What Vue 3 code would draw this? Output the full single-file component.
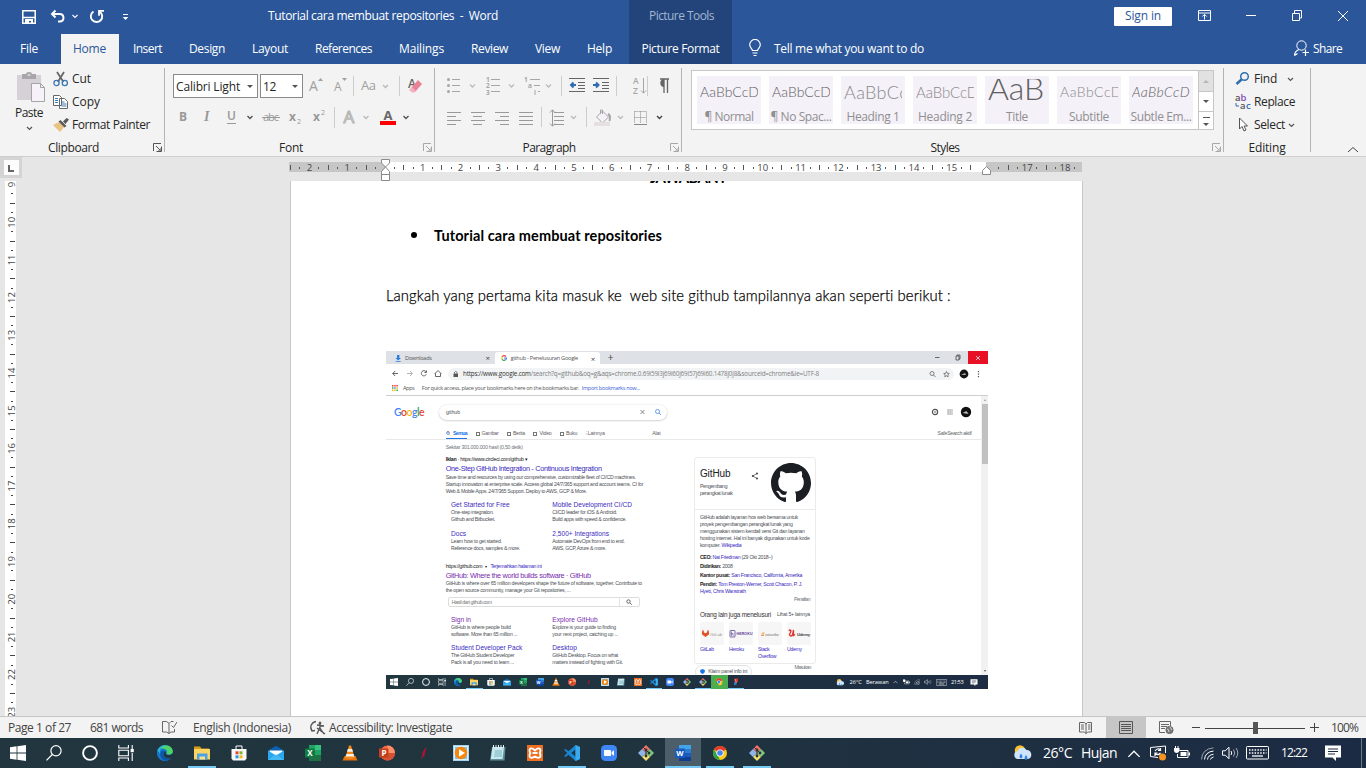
<script setup>
// Sets a text run to an exact width by spreading the difference over its letters.
const vFit = {
  mounted(el, { value }) {
    const range = document.createRange()
    range.selectNodeContents(el)
    const natural = range.getBoundingClientRect().width
    el.style.letterSpacing = `${(value - natural) / el.textContent.length}px`
    el.style.width = `${value}px`
  },
}

const docTitle = 'Tutorial cara membuat repositories\u00a0 -\u00a0 Word'
const paragraph = 'Langkah yang pertama kita masuk ke\u00a0 web site github tampilannya akan seperti berikut :'

const tabs = [
  ['Insert', 29], ['Design', 36], ['Layout', 36], ['References', 57],
  ['Mailings', 45], ['Review', 37], ['View', 25], ['Help', 25],
]

const styles = [
  { name: '¶ Normal', w: 49, sample: 'AaBbCcD', sw: 59, cls: 's-normal' },
  { name: '¶ No Spac...', w: 61, sample: 'AaBbCcD', sw: 59, cls: 's-normal' },
  { name: 'Heading 1', w: 53, sample: 'AaBbCc', sw: 64, cls: 's-h1' },
  { name: 'Heading 2', w: 54, sample: 'AaBbCcD', sw: 62, cls: 's-h2' },
  { name: 'Title', w: 22, sample: 'AaB', sw: 56, cls: 's-title' },
  { name: 'Subtitle', w: 40, sample: 'AaBbCcD', sw: 62, cls: 's-sub' },
  { name: 'Subtle Em...', w: 61, sample: 'AaBbCcD', sw: 58, cls: 's-em' },
]

const CM = 37.78
const hMarks = []
for (let q = -10; q <= 73; q++) {
  const x = 96 + (q * CM) / 4
  if (x < 1 || x > 791 || q === 0 || q === 64 || q === 63) continue
  hMarks.push({ x, kind: q % 4 === 0 ? 'n' : q % 2 === 0 ? 'bar' : 'dot', label: Math.abs(q / 4) })
}
const vMarks = []
for (let q = 36; q <= 92; q++) {
  vMarks.push({ y: 3.5 + ((q - 36) * 37.7) / 4, kind: q % 4 === 0 ? 'n' : q % 2 === 0 ? 'bar' : 'dot', label: q / 4 })
}

const systemIcons = ['win', 'search', 'cortana', 'tasks']
const apps = [
  ['edge'], ['folder', 'run'], ['store'], ['mail'], ['excel'], ['vlc'], ['ppt'], ['feather'], ['media'],
  ['note'], ['xampp'], ['code', 'run'], ['zoom'], ['git'], ['word', 'active'], ['chrome', 'run'], ['git', 'run'],
]
const shotApps = [
  ['edge'], ['folder', 'run'], ['store'], ['mail'], ['excel'], ['word'], ['vlc'], ['ppt'], ['feather'], ['media'],
  ['note'], ['xampp'], ['code', 'run'], ['zoom'], ['git'], ['git', 'run'], ['chrome', 'live'], ['snip', 'run'],
]

const adLinks = [
  [['Get Started for Free', 58.7], ['One-step integration.', 42.7], ['Github and Bitbucket.', 44]],
  [['Mobile Development CI/CD', 79.7], ['CI/CD leader for iOS & Android.', 64.7], ['Build apps with speed & confidence.', 74]],
  [['Docs', 15], ['Learn how to get started.', 50.7], ['Reference docs, samples & more.', 69]],
  [['2,500+ Integrations', 56.7], ['Automate DevOps from end to end.', 72.3], ['AWS, GCP, Azure & more.', 53.7]],
]
const siteLinks = [
  [['Sign in', 20, 1], ['GitHub is where people build', 59.7], ['software. More than 65 million ...', 66.3]],
  [['Explore GitHub', 45.4, 1], ['Explore is your guide to finding', 63.7], ['your next project, catching up ...', 65.7]],
  [['Student Developer Pack', 71.3], ['The GitHub Student Developer', 63.3], ['Pack is all you need to learn ...', 63]],
  [['Desktop', 24.7], ['GitHub Desktop. Focus on what', 65.7], ['matters instead of fighting with Git.', 70.7]],
]
const about = [
  ['GitHub adalah layanan hos web bersama untuk', 98],
  ['proyek pengembangan perangkat lunak yang', 92.7],
  ['menggunakan sistem kendali versi Git dan layanan', 104.7],
  ['hosting internet. Hal ini banyak digunakan untuk kode', 109.7],
]
const related = [
  { id: 'gitlab', name: 'GitLab', w: 14 }, { id: 'heroku', name: 'Heroku', w: 15 },
  { id: 'stack', name: 'Stack Overflow', w: 0 }, { id: 'udemy', name: 'Udemy', w: 15 },
]
</script>

<template>
  <div class="screen">
    <svg class="sprite" width="0" height="0">
      <symbol id="chev" viewBox="0 0 7 5"><path d="M1 1l2.5 2.5L6 1" fill="none" stroke="currentColor" stroke-width="1.2" /></symbol>
      <symbol id="launch" viewBox="0 0 9 9"><path d="M.5 8V.5H8M3 3l4 4M8.5 3.5v5h-5M8 5v3H5" fill="none" stroke="currentColor" /></symbol>
      <symbol id="win" viewBox="0 0 16 16"><path fill="#fff" d="M0 2.2l6.6-.9v6.2H0zM7.4 1.2L16 0v7.5H7.4zM0 8.4h6.6v6.3L0 13.8zM7.4 8.4H16V16l-8.6-1.2z" /></symbol>
      <symbol id="search" viewBox="0 0 16 16"><g fill="none" stroke="#fff" stroke-width="1.2"><circle cx="10" cy="5.8" r="5.1" /><path d="M6.3 9.5L.5 15.4" /></g></symbol>
      <symbol id="cortana" viewBox="0 0 16 16"><circle cx="8" cy="8" r="6.9" fill="none" stroke="#fff" stroke-width="1.9" /></symbol>
      <symbol id="tasks" viewBox="0 0 16 16"><g fill="none" stroke="#fff" stroke-width="1.1"><path d="M.8 0v3h9.6V0M.8 16v-3h9.6v3M.8 5.3h9.6v5.4H.8zM14.2 0v4M14.2 8v8" /></g><path fill="#fff" d="M12.6 4h3.2v3.2h-3.2z" /></symbol>
      <symbol id="edge" viewBox="0 0 16 16"><path fill="#1579cf" d="M8 0a8 8 0 1 0 6 13.2c-3 1.5-6.7.2-7.2-3.2C6.500 8 7.500 6.500 8 6c1.200 1 .3 2.500 1.500 3.600 2 1 6.500.2 6.500-2.600A8 8 0 0 0 8 0z" /><path fill="#4ed36b" d="M2 3.500C5-.8 12-1 15 3.500c1.800 3 .5 5.500-2 5.900-2.300.4-3.800-.3-3.200-1.500C10.800 5.500 9 3 2 3.500z" /><path fill="#2bb5d8" d="M.3 6C1.500 2 5.500-.8 10 .5 5 .5 2.500 4 3 9c-1-2-1-3-2.700-3z" /><path fill="#0f56a5" d="M3.500 8c-1 4 2 7.500 6 7.700 2-.3 3.500-1.200 4.500-2.500-4 1-7-.5-7.300-4C6.500 7 8 6 8 6 6 5 4 6 3.500 8z" /></symbol>
      <symbol id="folder" viewBox="0 0 16 16"><path fill="#d99b16" d="M0 1.500h6l1.500 2H15v4H0z" /><path fill="#fcd462" d="M0 4h16v10.500H0z" /><path fill="#4aa3e6" d="M3 8.500h10.500V14.500H3z" /><path fill="#fbe08c" d="M5.500 11.500h5.500v3H5.500z" /></symbol>
      <symbol id="store" viewBox="0 0 16 16"><path fill="none" stroke="#fff" d="M5 4V1h6v3" /><path fill="#f8f8f8" d="M.5 4h15v9.500l-1.500 2h-12l-1.500-2z" /><path fill="#e8492a" d="M4.500 6.300h3v3h-3z" /><path fill="#7ab929" d="M8.500 6.300h3v3h-3z" /><path fill="#1f9be8" d="M4.500 10.300h3v3h-3z" /><path fill="#f9b813" d="M8.500 10.300h3v3h-3z" /></symbol>
      <symbol id="mail" viewBox="0 0 16 16"><path fill="#0c61b3" d="M0 5.500L8 .8l8 4.700v4H0z" /><path fill="#fff" d="M1.500 5.500h13v5h-13z" /><path fill="#2aa7ee" d="M0 5.500l8 5 8-5V15H0z" /><path fill="#5cc9f8" d="M0 15l8-6 8 6z" opacity=".5" /></symbol>
      <symbol id="excel" viewBox="0 0 16 16"><path fill="#1e7145" d="M4 0h12v16H4z" /><path fill="#33c481" d="M10 0h6v5h-6z" /><path fill="#21a366" d="M4 0h6v5H4zM10 5h6v5h-6z" /><path fill="#107c41" d="M0 3.500h9.500v9H0z" /><text x="4.800" y="11" font-size="8" font-weight="700" fill="#fff" text-anchor="middle" font-family="Open Sans">X</text></symbol>
      <symbol id="word" viewBox="0 0 16 16"><path fill="#185abd" d="M4 0h12v16H4z" /><path fill="#41a5ee" d="M4 0h12v4H4z" /><path fill="#2b7cd3" d="M4 4h12v4H4z" /><path fill="#103f91" d="M4 12h12v4H4z" /><path fill="#185abd" d="M0 3.500h9.800v9.500H0z" /><text x="4.900" y="11" font-size="7.500" font-weight="700" fill="#fff" text-anchor="middle" font-family="Open Sans">W</text></symbol>
      <symbol id="vlc" viewBox="0 0 16 16"><path fill="#e8730c" d="M2.500 11h11l2 4.500H.5z" /><path fill="#f28a1c" d="M7 .5h2L12.800 13q-4.800 2-9.600 0z" /><path fill="#f5f0ea" d="M5.900 4h4.200l.9 2.800H5zM4.400 9h7.200l.8 2.500H3.600z" /></symbol>
      <symbol id="ppt" viewBox="0 0 16 16"><circle cx="8.500" cy="8" r="7.500" fill="#ed6c47" /><path fill="#ff8f6b" d="M8.500.5A7.500 7.500 0 0 1 16 8H8.500z" /><path fill="#d35230" d="M1 8h15a7.500 7.500 0 0 1-15 0z" /><path fill="#c43e1c" d="M0 3.500h9.500v9H0z" /><text x="4.900" y="11" font-size="8" font-weight="700" fill="#fff" text-anchor="middle" font-family="Open Sans">P</text></symbol>
      <symbol id="feather" viewBox="0 0 16 16"><path fill="#b3122d" d="M10.500 1.500c-1 2-3.500 3.500-4 6.500l-.3 2.500L5 13.500l.5.500 1.500-2.500c2-.5 1.800-2 2-3.500.2-2 1.200-3.500 1.500-6.500z" /></symbol>
      <symbol id="media" viewBox="0 0 16 16"><path fill="#a9d4ee" d="M0 0h16v16H0z" /><path fill="#dff0fa" d="M1 1h14v14H1z" /><path fill="#8abfe2" d="M2 2h12v12H2z" /><circle cx="8" cy="8" r="6.200" fill="#f5860e" /><path fill="#fff" d="M6 4.200L12 8l-6 3.800z" /></symbol>
      <symbol id="note" viewBox="0 0 16 16"><path fill="#5f8f9b" d="M2 2h13.500l-1 13.500H0z" /><path fill="#c7e8ec" d="M2.500 2H14l-1.500 12H.8z" /><path fill="#79b4c2" d="M5 5h7v7H4z" opacity=".5" /><path stroke="#e7f2f4" d="M3.500 0v3M6 0v3M8.500 0v3M11 0v3M13.500 0v3" /></symbol>
      <symbol id="xampp" viewBox="0 0 16 16"><path fill="#ee7023" d="M0 0h16v16H0z" /><path d="M3.500 3.500q2-.8 4.500 2 2.500-2.800 4.500-2c1.500 1 1 3 .2 4.500.8 1.500 1.300 3.500-.2 4.500-2 .8-4.500-1-4.500-1s-2.500 1.800-4.500 1c-1.500-1-1-3-.2-4.500-.8-1.500-1.300-3.500.2-4.500zM5.500 8h5" fill="none" stroke="#fff" stroke-width="1.800" /></symbol>
      <symbol id="code" viewBox="0 0 16 16"><path fill="#1a86d1" d="M11.500 0L16 2v12l-4.500 2L4.500 9.800 1.500 12 0 11.200 3.200 8 0 4.800 1.500 4l3 2.200zM11.500 4.500L7.200 8l4.300 3.500z" /><path fill="#3ba9ee" d="M11.500 0L16 2v12l-4.500 2z" /></symbol>
      <symbol id="zoom" viewBox="0 0 16 16"><rect width="16" height="16" rx="4.500" fill="#3f86f6" /><path fill="#fff" d="M3 5h6q1 0 1 1v5H4q-1 0-1-1zM10.600 7L13 5.200v5.600L10.600 9z" /></symbol>
      <symbol id="git" viewBox="0 0 16 16"><path fill="#f0726a" d="M8 0l4 4-4 4-4-4z" /><path fill="#7fc97a" d="M12 4l4 4-4 4-4-4z" /><path fill="#f3e06a" d="M8 8l4 4-4 4-4-4z" /><path fill="#8fb4e8" d="M4 4l4 4-4 4-4-4z" /><path d="M5.500 2.500L8 5v7M8.500 5.500L11 8" stroke="#26323a" fill="none" /><g fill="#26323a"><circle cx="8" cy="5" r="1.400" /><circle cx="8" cy="11" r="1.400" /><circle cx="11" cy="8" r="1.400" /></g></symbol>
      <symbol id="chrome" viewBox="0 0 16 16"><circle cx="8" cy="8" r="7" fill="#fbc917" /><path fill="#e33b2e" d="M8 8L1.900 4.500A7 7 0 0 1 14.100 4.500z" /><path fill="#e33b2e" d="M8 1a7 7 0 0 1 6.100 3.500H8z" /><path fill="#2da14c" d="M1.900 4.500L5.500 10 8 15A7 7 0 0 1 1.900 4.500z" /><circle cx="8" cy="8" r="3.600" fill="#fff" /><circle cx="8" cy="8" r="2.800" fill="#4285f4" /></symbol>
      <symbol id="snip" viewBox="0 0 16 16"><path fill="#d63a2c" d="M5 1h7v6l-4 3-3-3z" /><path fill="#3e74b8" d="M4 8h5v6H4z" /><path stroke="#ddd" d="M6 2l3 8" /></symbol>
      <symbol id="weather" viewBox="0 0 20 16"><circle cx="7" cy="5.500" r="5.300" fill="#fbc02d" /><path fill="#cfe4fa" d="M5 14a4 4 0 0 1-.5-7.900A5 5 0 0 1 13.500 5 4.600 4.600 0 0 1 15 14z" /><path fill="#2f86e0" d="M8 8.500q3 4 0 5-3-1 0-5zM13 10q3 4 0 5-3-1 0-5z" /></symbol>
      <symbol id="up" viewBox="0 0 12 8"><path d="M1 7l5-5 5 5" fill="none" stroke="#fff" stroke-width="1.200" /></symbol>
      <symbol id="battery" viewBox="0 0 16 14"><path d="M5.500 4.500H14v7H3.500V8" fill="none" stroke="#fff" /><path fill="#fff" d="M6.500 6H12.500v4H6.500zM14.500 6.500H16v3h-1.500zM0 2h5.500v3q-1 2-2.800 2Q.5 7 0 5zM1 0h1v2H1zM3.500 0h1v2h-1z" /></symbol>
      <symbol id="wifi" viewBox="0 0 13 13"><g fill="none" stroke="#fff"><path d="M.5 12.500Q1 2 12.500.8" opacity=".55" /><path d="M3.500 12.500Q4 5 12.500 4M6.500 12.500Q7 8 12.500 7.300M9.500 12.500q.5-2 3-2.500" /></g></symbol>
      <symbol id="volume" viewBox="0 0 17 14"><g fill="none" stroke="#fff"><path d="M.5 4.800h2.700L7 1.300v11.400L3.200 9.200H.5zM9 5q1.500 2 0 4" /><path d="M11.500 3.500q2.500 3.500 0 7M14 2q3.500 5 0 10" opacity=".6" /></g></symbol>
      <symbol id="keys" viewBox="0 0 23 14"><rect x=".5" y=".5" width="22" height="12.500" rx=".8" fill="none" stroke="#fff" /><path d="M3 4h17.500M3 7h17.500" stroke="#fff" stroke-dasharray="1.500 1.300" stroke-width="1.300" /><path d="M6 10h11" stroke="#fff" stroke-width="1.300" /></symbol>
      <symbol id="notice" viewBox="0 0 16 16"><path fill="#fff" d="M0 .5h16v12H11V16l-3.500-3.500H0z" /><path d="M3 4h10M3 6.500h10M3 9h7" stroke="#1c2b42" /></symbol>
    </svg>

    <header class="top">
      <div class="titlebar">
        <svg class="quick" width="140" height="32" fill="none" stroke="#fff">
          <path d="M22.800 10.800h12.400v12.400H22.800zM23 17.500h12" stroke-width="1.500" /><path fill="#fff" stroke="none" d="M25 19h8v5h-2v-3h-2v3h-4z" />
          <path d="M55.500 10.500L52 14l3.500 3.500M52.500 14h7.200c5 0 5 7.500 0 7.500H58" stroke-width="2" />
          <path d="M72.500 15l2.500 2.500 2.500-2.500" stroke-width="1.100" />
          <path d="M93.500 11.500a5.700 5.700 0 1 0 6.300.2" stroke-width="1.900" /><path d="M104 10.800h-5v5" stroke-width="1.800" />
          <path d="M123 14.500h5" /><path d="M122.700 17h5.600l-2.800 3z" fill="#fff" stroke="none" />
        </svg>
        <span v-fit="230" class="doc-name">{{ docTitle }}</span>
        <div class="context context-top"><span v-fit="65">Picture Tools</span></div>
        <div class="signin"><span v-fit="36">Sign in</span></div>
        <svg class="window-tools" width="160" height="32" fill="none" stroke="#fff">
          <path d="M4.500 10.500h12v10h-12zM4.500 13h12M10.500 19.500v-5M8.300 16.500l2.200-2.200 2.200 2.200" />
          <path d="M52 15.500h10M98.500 13.500h7v7h-7zM100.500 13v-2.500h7v7.500H106M144 11l10 10M154 11l-10 10" />
        </svg>
      </div>
      <nav class="tabs">
        <span v-fit="18" class="tab">File</span>
        <span class="tab home"><span v-fit="33">Home</span></span>
        <span v-for="[label, w] in tabs" :key="label" v-fit="w" class="tab">{{ label }}</span>
        <div class="context context-tab"><span v-fit="78">Picture Format</span></div>
        <svg class="bulb" width="12" height="18" fill="none" stroke="#fff"><path d="M3.500 11.500C3 9.500.7 8.500.7 5.800a5.200 5.200 0 0 1 10.600 0c0 2.700-2.300 3.700-2.800 5.700zM3.500 14h5M4.500 16.500h3" stroke-width="1.200" /></svg>
        <span v-fit="150" class="tab tell">Tell me what you want to do</span>
        <svg class="person" width="16" height="17" fill="none" stroke="#fff"><circle cx="7.500" cy="5.500" r="4.700" /><path d="M.5 15.500q0-4 4.500-6M.5 15.500l3-2M8.500 12.500h6.500M11.500 9.500V16" stroke-width="1.200" /></svg>
        <span v-fit="29" class="tab">Share</span>
      </nav>
    </header>

    <section class="ribbon">
      <div class="group clipboard">
        <div class="body">
          <div class="paste">
            <svg width="28" height="30"><path fill="#d5d1d7" d="M0 3h24v25H0z" /><path fill="#a9a6ab" d="M5 2h4q0-2 3-2t3 2h4v5H5zM10.500 2.500h3V4h-3z" fill-rule="evenodd" /><path d="M14.500 11.500h9l4 4v14h-13zM23.500 11.500v4h4" fill="#f7f2f9" stroke="#a5a3a8" /></svg>
            <span v-fit="28">Paste</span>
            <svg class="ch" width="7" height="5"><use href="#chev" /></svg>
          </div>
          <div class="commands">
            <div><svg width="16" height="16" fill="none"><path d="M4 1l6.500 10M11 1L4.800 11" stroke="#666" stroke-width="1.800" /><circle cx="3.500" cy="12" r="2.600" stroke="#3c78b4" stroke-width="1.300" /><circle cx="11.800" cy="12" r="2.600" stroke="#3c78b4" stroke-width="1.300" /></svg><span v-fit="19">Cut</span></div>
            <div><svg width="16" height="16" fill="#fff" stroke="#666"><path d="M.5 1.500h6l2 2v8h-8zM6.500 4.500h5l3 3v7h-8z" /><path d="M2 4.500h3M2 6.500h3M2 8.500h3M8.500 8h3M8.500 10h5M8.500 12h5" stroke="#3c78b4" /></svg><span v-fit="28">Copy</span></div>
            <div><svg width="16" height="16"><path fill="#eac282" d="M0 8l6-3 5 5-4 5z" /><path fill="#595959" d="M5.500 4.500l2-1.500 6 6-2 1.500zM10 4.500L13.500 1 16 2.500 12.500 7z" /></svg><span v-fit="78">Format Painter</span></div>
          </div>
        </div>
        <footer><span v-fit="51">Clipboard</span></footer><svg class="launch dark" width="9" height="9"><use href="#launch" /></svg>
      </div>

      <div class="group font">
        <div class="font-row">
          <div class="combo combo-name"><span v-fit="64">Calibri Light</span><i></i></div>
          <div class="combo combo-size"><span v-fit="13">12</span><i></i></div>
          <svg width="126" height="26" fill="#a0a0a0" font-family="Open Sans">
            <text x="6" y="18" font-size="14">A</text><path d="M15 8l2.500-3L20 8z" /><text x="31" y="18" font-size="12">A</text><path d="M39 5h5l-2.500 3z" />
            <path d="M50.500 3v20M96.500 3v20" stroke="#cfcdcb" /><text x="58" y="17" font-size="13" textLength="15">Aa</text><path d="M80 12l2.500 2.500L85 12" fill="none" stroke="#b8b8b8" stroke-width="1.300" />
            <text x="105" y="15" font-size="12" font-weight="600" fill="#666">A</text><path d="M108 15l7-8 4 4-7 8z" fill="#ea8296" /><path d="M106 17l3-3 4 4-3 2z" fill="#f2b0bd" />
          </svg>
        </div>
        <svg class="font-row2" width="260" height="26" fill="#999" font-family="Open Sans" font-size="13">
          <text x="14" y="17" font-weight="700" font-size="12">B</text><text x="39" y="17" font-style="italic" font-family="Liberation Serif" font-size="14" font-weight="700">I</text><text x="62" y="16" font-size="12" font-weight="600">U</text><path d="M62 19.500h9" stroke="#999" />
          <path d="M82.500 12l2.500 2.500 2.500-2.500" fill="none" stroke="#555" stroke-width="1.400" />
          <text x="98" y="17" font-size="11" textLength="16">abc</text><path d="M97 13.500h18" stroke="#999" />
          <text x="124" y="17" font-weight="700" font-size="12">x</text><text x="132" y="20" font-size="7">2</text><text x="148" y="17" font-weight="700" font-size="12">x</text><text x="156" y="11" font-size="7">2</text>
          <path d="M169.500 3v21" stroke="#cfcdcb" />
          <text x="178.500" y="19" font-size="17" fill="#fff" stroke="#b5b5b5" stroke-width="1.100">A</text><path d="M198.500 12l2.500 2.500 2.500-2.500" fill="none" stroke="#bbb" stroke-width="1.300" />
          <text x="218.500" y="16" font-size="13" font-weight="700" fill="#666">A</text><path fill="#f00" d="M215 17h16v4h-16z" /><path d="M238.500 12l2.500 2.500 2.500-2.500" fill="none" stroke="#555" stroke-width="1.400" />
        </svg>
        <footer><span v-fit="24">Font</span></footer><svg class="launch" width="9" height="9"><use href="#launch" /></svg>
      </div>

      <div class="group paragraph">
        <svg width="246" height="66" fill="none" stroke="#a6a6a6">
          <path d="M17 6.500h8M17 12.500h8M17 18.500h8" /><g fill="#a6a6a6" stroke="none"><circle cx="13.500" cy="6.500" r="1.500" /><circle cx="13.500" cy="12.500" r="1.500" /><circle cx="13.500" cy="18.500" r="1.500" /></g>
          <path d="M56 6.500h9M56 12.500h9M56 18.500h9M95 6.500h10M99 12.500h6M103 18.500h2M100 17v5" />
          <g fill="#a6a6a6" stroke="none" font-family="Open Sans" font-size="6.500" font-weight="700"><text x="51" y="9">1</text><text x="51" y="15.200">2</text><text x="51" y="21.500">3</text><text x="89" y="9">1</text><text x="93" y="15">a</text><text x="198" y="11" font-size="8.500" font-weight="600">A</text><text x="198" y="21" font-size="8.500" font-weight="600">Z</text></g>
          <path d="M35 11.500l2.500 2.500 2.500-2.500M74 11.500l2.500 2.500 2.500-2.500M111 11.500l2.500 2.500 2.500-2.500M136 43l2.500 2.500 2.500-2.500M183 43l2.500 2.500 2.500-2.500" stroke="#bbb" stroke-width="1.300" />
          <path d="M126.500 3v20M181.500 3v20M212.500 3v20M106.500 34v20M151.500 34v20" stroke="#cfcdcb" />
          <path d="M134 5.500h16M143 9.500h7M143 12.500h7M143 15.500h7M134 18.500h16M158 5.500h16M167 9.500h7M167 12.500h7M167 15.500h7M158 18.500h16" stroke="#666" />
          <path d="M141 12h-5M138.500 9.500L136 12l2.500 2.500M158 12h5M161 9.500l2.500 2.500-2.500 2.500" stroke="#2f6db0" stroke-width="2" />
          <path d="M208.500 5v15M206 17.500l2.500 2.700 2.500-2.700" />
          <path d="M229 20V6.500M232.500 20V6.500M225 6h9" stroke="#666" stroke-width="1.300" /><path d="M229 6v8c-5 0-5-8 0-8z" fill="#666" stroke="none" />
          <path d="M12 39.500h14M12 43.500h9M12 47.500h14M12 51.500h9M36 39.500h14M38 43.500h9M36 47.500h14M38 51.500h9M60 39.500h14M65 43.500h9M60 47.500h14M65 51.500h9M84 39.500h14M84 43.500h14M84 47.500h14M84 51.500h14" stroke="#999" />
          <path d="M119 39.500h10M119 43.500h10M119 47.500h10M119 51.500h10M117.500 37v16M115 39.500l2.500-2.700 2.500 2.700M115 50.500l2.500 2.700 2.500-2.700" stroke="#999" />
          <path d="M161.500 44l6-6 6 6-6 6zM167.500 41v-4h-2v4" fill="#f6f1f8" /><path d="M173 41q3 1 1.500 7" stroke-width="2" /><path d="M159 49h16v4h-16z" fill="#e6dfe2" stroke="none" />
          <path d="M199.500 38.500h12v12M199.500 38.500v12M205.500 38.500v12M199.500 44.500h12" stroke-dasharray="1 1" stroke="#888" /><path d="M199 51.500h13" stroke="#888" />
          <path d="M222 43l2.500 2.500 2.500-2.500" stroke="#444" stroke-width="1.400" />
        </svg>
        <footer><span v-fit="53">Paragraph</span></footer><svg class="launch" width="9" height="9"><use href="#launch" /></svg>
      </div>

      <div class="group styles">
        <div class="gallery">
          <div v-for="s in styles" :key="s.name" class="card">
            <div class="sample" :class="s.cls"><span v-fit="s.sw">{{ s.sample }}</span></div>
            <span v-fit="s.w" class="style-name">{{ s.name }}</span>
          </div>
          <div class="scroller"><b class="up"></b><b class="down"></b><b class="more"></b></div>
        </div>
        <footer><span v-fit="29">Styles</span></footer><svg class="launch" width="9" height="9"><use href="#launch" /></svg>
      </div>

      <div class="group editing">
        <div class="commands">
          <div><svg width="18" height="16" fill="none" stroke="#2f6db0"><circle cx="9.500" cy="5.500" r="3.800" stroke-width="1.500" /><path d="M6.500 8.500l-5 4.500" stroke-width="2.500" /></svg><span v-fit="23">Find</span><svg class="ch gap" width="7" height="5"><use href="#chev" /></svg></div>
          <div><svg width="18" height="18" font-family="Open Sans" font-size="9.500" font-weight="600"><text x="0" y="8" fill="#555">a</text><text x="5.500" y="8" fill="#8a4bb8">b</text><text x="5" y="16" fill="#555">a</text><text x="11" y="16" fill="#2f6db0">c</text><path d="M1 10v3h3" stroke="#2f6db0" fill="none" /></svg><span v-fit="41">Replace</span></div>
          <div><svg width="18" height="16" fill="#fff" stroke="#555"><path d="M4.500 1v11l2.500-2.500 2 4.500 2-1-2-4h3.500z" /></svg><span v-fit="31">Select</span><svg class="ch tight" width="7" height="5"><use href="#chev" /></svg></div>
        </div>
        <footer><span v-fit="37">Editing</span></footer>
      </div>
      <svg class="collapse" width="12" height="7"><path d="M1 6l5-4.500L11 6" fill="none" stroke="#444" /></svg>
    </section>

    <main class="workspace">
      <div class="ruler-row">
        <div class="corner"><i></i></div>
        <svg width="794" height="24">
          <path fill="#c6c6c6" d="M0 5h793v10H0z" /><path fill="#fff" d="M97 5h600v10H97z" />
          <g v-for="m in hMarks" :key="m.x">
            <text v-if="m.kind === 'n'" :x="m.x" y="14" class="num">{{ m.label }}</text>
            <rect v-else-if="m.kind === 'bar'" :x="Math.round(m.x - 0.5)" y="8" width="1" height="5" fill="#555" />
            <rect v-else :x="Math.round(m.x - 0.5)" y="10" width="1" height="2" fill="#555" />
          </g>
          <g fill="#fff" stroke="#8a8a8a"><path d="M92.500 2.500h8v3.500l-4 4-4-4zM96.500 10l4 4.500v9h-8v-9zM92.500 17.500h8M693.500 17.500v-4l4-4 4 4v4z" /></g>
        </svg>
      </div>
      <div class="canvas">
        <svg class="v-ruler" width="11" height="535">
          <path fill="#fff" d="M0 0h11v535H0z" />
          <g v-for="m in vMarks" :key="m.y">
            <text v-if="m.kind === 'n'" :transform="`translate(10 ${m.y}) rotate(-90)`" class="num">{{ m.label }}</text>
            <rect v-else-if="m.kind === 'bar'" x="5" :y="Math.round(m.y - 0.5)" width="5" height="1" fill="#444" />
            <rect v-else x="6" :y="Math.round(m.y - 0.5)" width="2" height="1" fill="#444" />
          </g>
        </svg>
        <article class="page">
          <h2><span v-fit="74">JAWABAN :</span></h2>
          <h3><i></i><span v-fit="228">Tutorial cara membuat repositories</span></h3>
          <p class="para"><span v-fit="565">{{ paragraph }}</span></p>

          <div class="shot">
            <div class="c-tabs">
              <svg width="16" height="13"><path fill="#2a7de1" d="M11 4h2.400v3h1.600l-2.800 2.500L9.400 7H11zM9.700 10.200h5v.8h-5z" /></svg>
              <span v-fit="26.700" class="c-dl">Downloads</span><b class="c-x">×</b>
              <div class="c-active"><svg width="6" height="6" viewBox="0 0 12 12" fill="none" stroke-width="2.400"><path d="M10 3A5 5 0 0 0 2 3.500" stroke="#ea4335" /><path d="M2 3.500v5" stroke="#fbbc05" /><path d="M2 8.500a5 5 0 0 0 7 1" stroke="#34a853" /><path d="M9 9.500Q11 8 11 6H6" stroke="#4285f4" /></svg><span v-fit="67.300">github - Penelusuran Google</span><b>×</b></div>
              <b class="c-plus">+</b>
              <svg class="c-win" width="57" height="13" fill="none" stroke="#333" stroke-width=".7"><path d="M4 6.500h4.500M25 5h3v4h-3zM26 5V4h3v4h-1" /><path fill="#e81123" stroke="none" d="M37 0h20v13H37z" /><path d="M45 5l4 4M49 5l-4 4" stroke="#fff" /></svg>
            </div>
            <div class="c-bar">
              <svg width="62" height="17" fill="none" stroke="#555" stroke-width=".9"><path d="M12 9.500H7M9.200 7L6.700 9.500 9.200 12" /><path d="M21 9.500h5M24 7l2.500 2.500L24 12" stroke="#aaa" /><path d="M40 7.700a2.600 2.600 0 1 0 .3 2.600M40.500 6.500v2h-2" /><path d="M48.500 10l3.500-3.500 3.500 3.500M49.500 9.500V12.500h5V9.500" /></svg>
              <div class="c-url"><svg width="15" height="12"><path fill="#555" d="M5.500 5.500h4.500v3.500H5.500z" /><path d="M6.500 5.500V4.200q1.200-1.500 2.500 0v1.300" fill="none" stroke="#555" stroke-width=".7" /></svg><span v-fit="356"><span class="ink">https://www.google.com</span>/search?q=github&amp;oq=g&amp;aqs=chrome.0.69i59l3j69i60j69i57j69i60.1478j0j8&amp;sourceid=chrome&amp;ie=UTF-8</span>
                <svg class="c-url-end" width="26" height="12" fill="none" stroke="#555" stroke-width=".7"><circle cx="6" cy="5.500" r="2" /><path d="M7.500 7l2 2M20.500 3.500l.8 1.800 2 .2-1.500 1.300.4 2-1.700-1-1.700 1 .4-2-1.500-1.300 2-.2z" /></svg></div>
              <svg class="c-me" width="30" height="12"><circle cx="10" cy="6" r="4.400" fill="#151515" /><path d="M7 7l4-2 1 2z" fill="#aaa" /><path d="M24.500 3v1.200M24.500 5.500v1.200M24.500 8v1.200" stroke="#555" stroke-width="1.200" /></svg>
            </div>
            <div class="c-marks"><svg width="6" height="6"><path fill="#ea4335" d="M0 0h1.500v1.500H0zM2.200 0h1.500v1.500H2.200zM4.400 0h1.500v1.500H4.400z" /><path fill="#34a853" d="M0 2.200h1.500v1.500H0zM4.400 4.400h1.500v1.500H4.400z" /><path fill="#4285f4" d="M2.200 2.200h1.500v1.500H2.200z" /><path fill="#fbbc05" d="M4.400 2.200h1.500v1.500H4.400zM0 4.400h1.500v1.500H0zM2.200 4.400h1.500v1.500H2.200z" /></svg>
              <span v-fit="11.300" class="m-apps">Apps</span><span v-fit="157.300">For quick access, place your bookmarks here on the bookmarks bar.</span><span v-fit="58" class="m-link">Import bookmarks now...</span></div>

            <div class="g-page">
              <div class="g-main">
                <div class="g-head">
                  <span v-fit="30" class="g-logo"><i class="b">G</i><i class="r">o</i><i class="y">o</i><i class="b">g</i><i class="gr">l</i><i class="r">e</i></span>
                  <div class="g-box"><span v-fit="14">github</span><svg width="24" height="8" fill="none" stroke-width=".8"><path d="M1.500 2l4 4M5.500 2l-4 4" stroke="#666" /><circle cx="18.500" cy="3.500" r="2" stroke="#4285f4" /><path d="M20 5l2 2" stroke="#4285f4" /></svg></div>
                  <svg class="g-user" width="42" height="12" fill="none" stroke="#555"><circle cx="5" cy="6" r="2.600" stroke-width="1.200" /><circle cx="5" cy="6" r=".8" fill="#555" stroke="none" /><path d="M17.500 4h5M17.500 6h5M17.500 8h5" stroke-dasharray="1.200 .8" /><circle cx="36" cy="6" r="5.200" fill="#101010" stroke="none" /><path d="M32.500 7l4-2 2 3z" fill="#bbb" stroke="none" /></svg>
                </div>
                <div class="g-tabs">
                  <span class="on"><svg width="5" height="5" fill="none"><circle cx="2" cy="2" r="1.400" stroke="#4285f4" stroke-width=".8" /><path d="M3 3l1.500 1.500" stroke="#fbbc05" stroke-width=".8" /><path d="M1 1.200q1-1 2 0" stroke="#ea4335" stroke-width=".8" /></svg><em v-fit="14">Semua</em></span>
                  <span><i></i><em v-fit="16.700">Gambar</em></span><span><i></i><em v-fit="12">Berita</em></span><span><i></i><em v-fit="12">Video</em></span><span><i class="book"></i><em v-fit="11">Buku</em></span><span class="etc"><em v-fit="19">⁝ Lainnya</em></span><span class="alat"><em v-fit="8.300">Alat</em></span><span class="safe"><em v-fit="34">SafeSearch aktif</em></span>
                </div>
                <div class="g-cols">
                  <div class="results">
                    <p class="grey stats"><span v-fit="77">Sekitar 301.000.000 hasil (0,50 detik)</span></p>
                    <p class="cite"><span v-fit="82"><b>Iklan</b> · https://www.circleci.com/github ▾</span></p>
                    <h4 class="blue"><span v-fit="156">One-Step GitHub Integration - Continuous Integration</span></h4>
                    <p><span v-fit="190">Save time and resources by using our comprehensive, customizable fleet of CI/CD machines.</span></p>
                    <p><span v-fit="197.500">Startup innovation at enterprise scale. Access global 24/7/365 support and account teams. CI for</span></p>
                    <p><span v-fit="141">Web &amp; Mobile Apps. 24/7/365 Support. Deploy to AWS, GCP &amp; More.</span></p>
                    <div class="links ads"><div v-for="l in adLinks" :key="l[0][0]"><h5><span v-fit="l[0][1]">{{ l[0][0] }}</span></h5><p><span v-fit="l[1][1]">{{ l[1][0] }}</span></p><p><span v-fit="l[2][1]">{{ l[2][0] }}</span></p></div></div>
                    <p class="cite second"><span v-fit="36.700">https://github.com</span><span class="tri">▾</span><span v-fit="51.300" class="blue">Terjemahkan halaman ini</span></p>
                    <h4 class="purple"><span v-fit="145">GitHub: Where the world builds software · GitHub</span></h4>
                    <p><span v-fit="196.300">GitHub is where over 65 million developers shape the future of software, together. Contribute to</span></p>
                    <p><span v-fit="124.700">the open source community, manage your Git repositories, ...</span></p>
                    <div class="inline-search"><span v-fit="40">Hasil dari github.com</span><svg width="20" height="10" fill="none" stroke="#444" stroke-width=".8"><path d="M.5 0v10" stroke="#ddd" /><circle cx="9.500" cy="4.500" r="1.700" /><path d="M11 6l1.700 1.700" /></svg></div>
                    <div class="links"><div v-for="l in siteLinks" :key="l[0][0]"><h5 :class="{ purple: l[0][2] }"><span v-fit="l[0][1]">{{ l[0][0] }}</span></h5><p><span v-fit="l[1][1]">{{ l[1][0] }}</span></p><p><span v-fit="l[2][1]">{{ l[2][0] }}</span></p></div></div>
                  </div>
                  <div class="side">
                    <div class="panel">
                      <div class="p-head">
                        <div><h4><span v-fit="30.700">GitHub</span></h4><p><span v-fit="27.300">Pengembang</span></p><p><span v-fit="32.700">perangkat lunak</span></p></div>
                        <svg class="share" width="8" height="8" fill="#444"><circle cx="1.800" cy="4" r="1" /><circle cx="6" cy="1.500" r="1" /><circle cx="6" cy="6.500" r="1" /><path d="M6 1.500L1.800 4 6 6.500" fill="none" stroke="#444" stroke-width=".7" /></svg>
                        <svg width="40" height="40" viewBox="0 0 16 16"><path fill="#1b1f23" d="M8 0C3.580 0 0 3.580 0 8c0 3.540 2.290 6.530 5.470 7.590.4.07.55-.17.55-.38 0-.19-.01-.82-.01-1.490-2.010.37-2.530-.49-2.690-.94-.09-.23-.48-.94-.82-1.130-.28-.15-.68-.52-.01-.53.63-.01 1.080.58 1.230.82.72 1.210 1.870.87 2.330.66.07-.52.28-.87.51-1.070-1.780-.2-3.640-.89-3.640-3.950 0-.87.31-1.590.82-2.150-.08-.2-.36-1.020.08-2.120 0 0 .67-.21 2.200.82.64-.18 1.320-.27 2-.27s1.360.09 2 .27c1.530-1.040 2.200-.82 2.200-.82.44 1.100.16 1.920.08 2.120.51.56.82 1.270.82 2.150 0 3.070-1.870 3.750-3.650 3.950.29.25.54.73.54 1.480 0 1.070-.01 1.930-.01 2.200 0 .21.15.46.55.38A8.010 8.010 0 0 0 16 8c0-4.420-3.580-8-8-8z" /></svg>
                      </div>
                      <div class="p-body">
                        <p v-for="a in about" :key="a[0]"><span v-fit="a[1]">{{ a[0] }}</span></p>
                        <p><span v-fit="21.700">komputer. </span><span v-fit="19.700" class="blue">Wikipedia</span></p>
                        <p class="fact first"><b v-fit="12.700">CEO: </b><span v-fit="27.700" class="blue">Nat Friedman</span><span v-fit="32.300"> (29 Okt 2018–)</span></p>
                        <p class="fact"><b v-fit="22.300">Didirikan: </b><span v-fit="10.300">2008</span></p>
                        <p class="fact"><b v-fit="31.300">Kantor pusat: </b><span v-fit="71" class="blue">San Francisco, California, Amerika</span></p>
                        <p class="fact"><b v-fit="18.300">Pendiri: </b><span v-fit="84" class="blue">Tom Preston-Werner, Scott Chacon, P. J.</span></p>
                        <p><span v-fit="46" class="blue">Hyett, Chris Wanstrath</span></p>
                        <p class="grey right pen"><span v-fit="16">Penafian</span></p>
                        <div class="also"><span v-fit="71" class="lead">Orang lain juga menelusuri</span><span v-fit="33">Lihat 5+ lainnya</span></div>
                        <div class="tiles">
                          <div v-for="r in related" :key="r.id"><figure :class="r.id">
                            <svg v-if="r.id === 'gitlab'" width="24" height="24"><path fill="#e2532a" d="M2 10l1-2.500L4.500 11h2L8 7.500 9 10v2.500L5.500 15 2 12.500z" /><text x="10" y="13.500" font-size="4.200" fill="#999" textLength="12">GitLab</text></svg>
                            <svg v-else-if="r.id === 'heroku'" width="24" height="24"><rect x="1" y="8.500" width="5" height="6.500" rx=".6" fill="none" stroke="#5a4298" stroke-width=".8" /><path d="M2.500 9.500v4l1-.8 1 .8M2.500 11.500q2-.5 2 1" stroke="#5a4298" stroke-width=".6" fill="none" /><text x="7.500" y="13.200" font-size="3.600" font-weight="700" fill="#5a4298" textLength="16">HEROKU</text></svg>
                            <svg v-else-if="r.id === 'stack'" width="24" height="24"><path d="M3 13.500h3M3.500 12h2.500M4.500 11h2" stroke="#f48024" stroke-width=".8" /><text x="7" y="13.500" font-size="3" fill="#888" textLength="14">stackoverflow</text></svg>
                            <svg v-else width="24" height="24"><path d="M2 9q1-2 2 0L2.500 13q1 2 3 0l1-5v5.500l1.500-1" stroke="#e0342f" stroke-width="1.300" fill="none" /><text x="10" y="13.500" font-size="4.200" font-weight="700" fill="#444" textLength="13">Udemy</text></svg>
                          </figure><p v-if="r.w" class="blue"><span v-fit="r.w">{{ r.name }}</span></p><template v-else><p class="blue"><span v-fit="11.500">Stack</span></p><p class="blue"><span v-fit="18.500">Overflow</span></p></template></div>
                        </div>
                      </div>
                    </div>
                    <div class="claim"><div><svg width="5" height="5"><path fill="#1a73e8" d="M2.500 0L4.800 1v2q-.8 1.500-2.300 2Q1 4.500.2 3V1z" /></svg><span v-fit="39">Klaim panel info ini</span></div><span v-fit="16.300" class="grey">Masukan</span></div>
                  </div>
                </div>
              </div>
              <div class="g-scroll"><i></i><b></b><i class="dn"></i></div>
            </div>

            <div class="mini-bar">
              <span v-for="n in systemIcons" :key="n" class="sys"><svg width="8" height="8"><use :href="'#' + n" /></svg></span>
              <span v-for="([n, state], i) in shotApps" :key="i" :class="state"><svg width="8" height="8"><use :href="'#' + n" /></svg></span>
              <div class="mini-tray">
                <svg width="9" height="7"><use href="#weather" /></svg><em v-fit="12.500">26°C</em><em v-fit="22.700">Berawan</em><svg width="5" height="4"><use href="#up" /></svg><svg width="7" height="6"><use href="#battery" /></svg><svg width="6" height="6"><use href="#wifi" /></svg><svg width="8" height="6"><use href="#volume" /></svg><svg width="11" height="7"><use href="#keys" /></svg><em v-fit="12.300">21:53</em><svg width="8" height="7"><use href="#notice" /></svg>
              </div>
            </div>
          </div>
        </article>
      </div>
    </main>

    <section class="status">
      <span v-fit="63">Page 1 of 27</span><span v-fit="53">681 words</span>
      <svg width="15" height="15" fill="none" stroke="#666"><path d="M7 13.500L4.500 12H.5V1.500h4L7 3.500zM7 3.500l2-2h2.500M7 13.500L9 12h3.500V9M9.500 5.500l2 2L15 2" /></svg>
      <span v-fit="98">English (Indonesia)</span>
      <svg width="16" height="16" fill="none" stroke="#555"><path d="M6 1.500A6 6 0 0 0 2 11M1 8l1 3 3-.5M7 5l7 1M10 3v4l-3 7M10 8l4 6M7 8l8 6" stroke-width="1.300" /><circle cx="10" cy="3" r="1" fill="#555" /></svg>
      <span v-fit="123">Accessibility: Investigate</span>
      <svg width="14" height="14" fill="none" stroke="#666"><path d="M.5 1.500h5L7 3l1.500-1.500h4v9.500h-4L7 12.500 5.500 11h-5zM7 3v10M2 4h3M2 6h3M2 8h3M9 4h2.500M9 6h2.500M9 8h2.500" /></svg>
      <div class="selected"><svg width="14" height="14" fill="none" stroke="#555"><path d="M.5.5h13v12H.5zM2 3.500h10M2 5.500h10M2 7.500h10M2 9.500h10" /></svg></div>
      <svg width="15" height="14" fill="none" stroke="#666"><path d="M6 11.500H.5V.5h11V5M2 3.500h8M2 5.500h6M2 7.500h4" /><circle cx="10.500" cy="9" r="3.600" fill="#777" /><path d="M8 8q2 0 2 3M11 6l2 3" stroke="#eee" stroke-width=".8" /></svg>
      <svg class="slider" width="130" height="16" stroke="#444"><path d="M0 7.500h8M13 8.500h100M118 7.500h9M122.500 3v9" /><path d="M61 2h5v12h-5z" fill="#555" stroke="none" /></svg>
      <span v-fit="27">100%</span>
    </section>

    <section class="taskbar">
      <span v-for="n in systemIcons" :key="n" class="sys"><svg width="16" height="16"><use :href="'#' + n" /></svg></span>
      <div class="apps"><span v-for="([n, state], i) in apps" :key="i" :class="state"><svg width="16" height="16"><use :href="'#' + n" /></svg></span></div>
      <div class="tray">
        <svg width="20" height="16"><use href="#weather" /></svg><em v-fit="29">26°C</em><em v-fit="36">Hujan</em>
        <svg width="14" height="9"><use href="#up" /></svg>
        <svg width="17" height="16" fill="none" stroke="#fff"><path d="M15.500 8V1L.5 2.500v9L8 12.500" /><path d="M5 6q2.500-3.500 5.500-1M10.500 3v2.500H8M10.500 8q-2.500 3-5.500.5M5 11V8h2.500" stroke-width="1.200" /><circle cx="12.500" cy="12" r="3.500" fill="#f7931e" stroke="none" /></svg>
        <svg width="16" height="14"><use href="#battery" /></svg><svg width="13" height="13"><use href="#wifi" /></svg><svg width="17" height="14"><use href="#volume" /></svg><svg width="23" height="14"><use href="#keys" /></svg>
        <em v-fit="26" class="clock">12:22</em><svg width="16" height="16"><use href="#notice" /></svg><i class="peek"></i>
      </div>
    </section>
  </div>
</template>

<style>
html, body { margin: 0; overflow: hidden; }
</style>

<style scoped>
.screen { width: 1366px; height: 768px; overflow: hidden; display: flex; flex-direction: column; font: 12px/16px "Open Sans", "Noto Sans", sans-serif; color: #262626; background: #e6e6e6; }
.screen * { box-sizing: border-box; }
span, em, b { white-space: pre; flex-shrink: 0; }
em, i { font-style: normal; }
svg { flex-shrink: 0; display: block; }
.sprite { position: absolute; }
p, h2, h3, h4, h5, figure { margin: 0; font-weight: 400; }

.top { height: 64px; background: #2b579a; color: #fff; flex-shrink: 0; }
.titlebar, .tabs { display: flex; align-items: center; height: 32px; }
.doc-name { margin-left: 128px; }
.context { width: 103px; height: 32px; background: #22447a; display: flex; align-items: center; justify-content: center; }
.context-top { margin-left: 131px; color: #a3b6d2; padding-left: 2px; }
.signin { margin-left: 382px; width: 58px; height: 19px; background: #fff; color: #2b579a; display: flex; align-items: center; justify-content: center; border-radius: 1px; }
.window-tools { margin-left: 22px; }
.tabs { padding-left: 20px; gap: 27px; }
.tabs > * { flex-shrink: 0; }
.tab, .context-tab span { padding-top: 2px; }
.tab.home { margin: 2px -13px 0 -4px; height: 30px; width: 58px; padding: 0 0 0 12px; background: #f3f3f3; color: #2b579a; }
.home span { display: block; line-height: 30px; }
.context-tab { margin-left: -10px; }
.bulb { margin-left: -10px; }
.tell { margin-left: -14px; }
.person { margin-left: 343px; margin-right: -24px; }

.ribbon { height: 93px; background: #f3f3f3; border-bottom: 1px solid #d0cecc; display: flex; align-items: flex-start; padding-top: 4px; flex-shrink: 0; }
.group { position: relative; height: 84px; border-right: 1px solid #b5b3b1; }
.group footer { position: absolute; bottom: -4px; left: 0; right: 0; display: flex; justify-content: center; line-height: 16px; }
.launch { position: absolute; right: 2px; bottom: 0; color: #a8a8a8; }
.launch.dark { color: #555; }
.ch { color: #555; }
.clipboard { width: 165px; } .font { width: 270px; } .paragraph { width: 247px; } .styles { width: 542px; } .editing { width: 87px; }
.clipboard footer { right: 17px; } .font footer { right: 17px; } .paragraph footer { right: 18px; } .styles footer { right: 15px; } .editing footer { right: 0; }
.body { display: flex; }
.paste { width: 53px; padding: 4px 0 0 5px; display: flex; flex-direction: column; align-items: center; }
.paste svg:first-child { margin-left: 4px; }
.paste span { margin-top: 3px; }
.paste .ch { margin-top: 5px; }
.commands { display: flex; flex-direction: column; gap: 7px; padding-top: 3px; }
.commands div { display: flex; align-items: center; gap: 3px; height: 16px; }
.editing .commands { padding-left: 11px; }
.editing .commands div { gap: 1px; }
.ch.gap { margin-left: 9px; } .ch.tight { margin-left: 2px; }
.font-row { display: flex; padding: 6px 0 0 8px; height: 32px; }
.combo { height: 24px; background: #fff; border: 1px solid #8c8a88; display: flex; align-items: center; justify-content: space-between; padding: 1px 4px 0 2px; }
.combo-name { width: 85px; } .combo-size { width: 43px; margin-left: 2px; }
.combo i { border: 3px solid transparent; border-top-color: #555; border-bottom: 0; }
.font-row2 { margin-top: 4px; }
.font-row svg { margin-top: -1px; }
.paragraph > svg:first-child { margin-top: 5px; }
.gallery { margin: 2px 0 0 9px; width: 523px; height: 60px; border: 1px solid #c8c6c4; background: #fff; display: flex; padding: 5px 0 0 5px; gap: 8px; }
.card { width: 64px; height: 48px; background: #f5f1f8; color: #8f8f8f; display: flex; flex-direction: column; align-items: center; flex-shrink: 0; }
.sample { width: 58px; height: 33px; overflow: hidden; font: 300 14px/32px "Lato"; color: #606060; flex-shrink: 0; }
.s-h1 { font-size: 18px; color: #8a8a8a; } .s-h2 { font-size: 15px; color: #8a8a8a; } .s-title { font-size: 32px; line-height: 18px; height: 26px; margin-bottom: 4px; margin-top: 3px; }
.s-em { font-style: italic; } .s-sub { color: #8a8a8a; }
.scroller { margin: -5px 0 0 -3px; width: 15px; height: 58px; border-left: 1px solid #c8c6c4; display: grid; grid-template-rows: 20px 20px 18px; }
.scroller b { display: grid; place-items: center; border-top: 1px solid #c8c6c4; }
.scroller b::after { content: ""; border: 3px solid transparent; border-top-color: #555; border-bottom: 0; }
.scroller .up { border: 0; background: #e1e1e1; }
.scroller .up::after { border: 3px solid transparent; border-bottom-color: #b5b5b5; border-top: 0; }
.scroller .more::before { content: ""; width: 7px; border-top: 1px solid #555; margin-bottom: -4px; }
.collapse { margin: 78px 0 0 36px; }

.workspace { height: 559px; flex-shrink: 0; overflow: hidden; }
.ruler-row { height: 24px; display: flex; }
.corner { width: 22px; height: 21px; background: #d4d4d4; margin-right: 267px; display: grid; place-items: center; }
.corner i { width: 15px; height: 15px; background: linear-gradient(#666, #666) 4px 5px / 2px 6px no-repeat, linear-gradient(#666, #666) 4px 10px / 6px 2px no-repeat, #fcfcfc; }
.num { font: 9.500px "Open Sans"; fill: #444; text-anchor: middle; }
.canvas { display: flex; height: 535px; }
.v-ruler { margin: 0 274px 0 5px; }
.page { width: 793px; background: #fff; border: solid #c6c6c6; border-width: 0 1px; padding: 0 94px 0 95px; overflow: hidden; color: #000; font: 15px/20px "Lato", "Open Sans", sans-serif; flex-shrink: 0; }
.page h2 { margin: -14px 0 38px; font-size: 15px; font-weight: 700; text-align: center; height: 20px; }
.page h2 span { display: inline-block; }
.page h3 { display: flex; align-items: center; font-size: 14.500px; font-weight: 700; height: 20px; }
.page h3 span { padding-top: 1px; }
.page h3 i { width: 6px; height: 6px; border-radius: 50%; background: #000; margin: 0 17px 0 25px; }
.para { margin-top: 40px; height: 20px; display: flex; font-size: 14.800px; font-weight: 300; -webkit-text-stroke: .25px #000; }

.shot { margin-top: 46px; width: 602px; height: 338px; background: #fff; overflow: hidden; font: 5.600px/7px "Open Sans"; color: #555; display: flex; flex-direction: column; }
.shot > * { flex-shrink: 0; }
.c-tabs { height: 13px; background: #dee1e6; display: flex; align-items: center; }
.c-dl { margin-left: 3px; padding-top: 1px; }
.c-tabs b { font-weight: 400; font-size: 8px; width: 6px; text-align: center; color: #444; }
.c-x { margin: 0 4px 0 53px; }
.c-active { width: 105px; height: 12px; margin-top: 1px; background: #fff; border-radius: 3px 3px 0 0; display: flex; align-items: center; padding-left: 6px; gap: 4px; }
.c-active b { margin-left: 8px; }
.c-tabs .c-plus { margin-left: 8px; font-size: 10px; }
.c-win { margin-left: auto; }
.c-bar { height: 17px; display: flex; align-items: center; }
.c-url { width: 506px; height: 12px; border-radius: 6px; margin-top: 2px; background: #f1f3f4; display: flex; align-items: center; font-size: 6.300px; color: #808080; }
.ink { color: #333; }
.c-url-end { margin-left: auto; margin-right: 2px; }
.c-me { margin-top: 2px; }
.c-marks { height: 15px; border-bottom: 1px solid #cfcfcf; display: flex; align-items: center; padding-left: 6px; }
.m-apps { margin: 0 7.500px 0 5px; }
.m-link { color: #3b5fd6; margin-left: 2.700px; }
.g-page { height: 279px; display: flex; font: 5.200px/7px "Liberation Sans"; color: #4d5156; overflow: hidden; }
.g-main { width: 595px; }
.g-scroll { width: 7px; background: #f1f1f1; display: flex; flex-direction: column; align-items: center; padding: 3px 0; }
.g-scroll b { width: 6px; height: 60px; margin-top: 3px; background: #c1c1c1; }
.g-scroll i { border: 1.500px solid transparent; border-bottom: 2px solid #999; border-top: 0; }
.g-scroll .dn { margin-top: auto; border: 1.500px solid transparent; border-top: 2px solid #555; border-bottom: 0; }
.g-head { height: 32px; display: flex; align-items: center; padding-left: 8px; }
.g-logo { font: 600 10.500px/14px "Lato"; }
.b { color: #4285f4; } .r { color: #ea4335; } .y { color: #fbbc05; } .gr { color: #34a853; }
.g-box { margin-left: 15px; width: 228px; height: 15px; border-radius: 8px; box-shadow: 0 .5px 2px #bbb; display: flex; align-items: center; justify-content: space-between; padding: 0 4px 0 7px; }
.g-user { margin-left: 263px; }
.g-tabs { height: 12px; border-bottom: .7px solid #e8e8e8; display: flex; padding-left: 60px; align-items: flex-start; color: #5f6368; }
.g-tabs span { display: flex; align-items: center; gap: 2px; height: 11px; margin-right: 8.600px; }
.g-tabs i { width: 4px; height: 4px; border: .8px solid #777; }
.g-tabs .on { color: #1a73e8; border-bottom: 1.200px solid #1a73e8; font-weight: 700; }
.g-tabs .alat { margin-left: 39px; } .g-tabs .safe { margin-left: auto; margin-right: 9.500px; }
.g-cols { display: flex; }
.results { width: 248.500px; margin-left: 59.700px; padding-top: 3.500px; flex-shrink: 0; }
.shot p { height: 7px; display: flex; align-items: center; }
.results h4 { height: 10px; font-size: 7.300px; line-height: 12px; display: flex; }
.blue, h5 { color: #3a2bc0; } .purple { color: #7a2bae; }
.cite { margin-top: 5.900px; color: #202124; }
.results h4 + p { margin-top: .5px; }
.links { display: grid; grid-template-columns: 101.300px 1fr; padding-left: 5.300px; row-gap: 6.800px; margin-top: 8.300px; }
.links.ads { margin-top: 6.300px; row-gap: 6.700px; }
.links h5 { height: 8px; font-size: 6.600px; line-height: 8.500px; }
.links h5.purple { color: #7a2bae; }
.cite.second { margin-top: 10.700px; }
.tri { margin: 0 3px 0 3px; font-size: 4px; }
.inline-search { margin: 2.800px 0 0 2.600px; width: 192px; height: 10.400px; border: .8px solid #ddd; border-radius: 2px; display: flex; align-items: center; justify-content: space-between; padding-left: 2.500px; color: #777; }
.side { width: 121.500px; padding-top: 16.500px; }
.panel { height: 207.200px; border: 1px solid #ebebeb; border-radius: 3px; }
.p-head { height: 52px; padding: 5px 3px 0 4.700px; display: flex; border-bottom: 1px solid #ebebeb; }
.p-head h4 { font-size: 10px; line-height: 14px; height: 20px; padding-top: 4px; color: #202124; }
.p-head > div { width: 51px; }
.share { margin: 9px 12px 0 0; }
.grey { color: #70757a; }
.p-body { padding: 4.500px 4.700px 0; }
.p-body .fact { margin-top: 2.100px; } .p-body .fact.first { margin-top: 4.900px; }
.p-body b { color: #222; }
.right { justify-content: flex-end; }
.pen { margin-top: 1px; }
.also { display: flex; justify-content: space-between; align-items: center; height: 10px; margin: 6.500px 0 2px; }
.lead { font-size: 6.400px; color: #333; }
.tiles { display: grid; grid-template-columns: repeat(4, 24px); column-gap: 5px; }
.tiles figure { height: 23.500px; background: #f6f6f6; border-radius: 2px; }
.tiles p:first-of-type { margin-top: .5px; }
.claim { display: flex; justify-content: space-between; padding: 0 5px 0 1px; }
.claim div { margin-top: 1px; width: 57px; height: 14px; border: 1px solid #e3e3e3; border-radius: 7px; display: flex; align-items: center; gap: 3px; padding-left: 4px; }
.mini-bar { height: 14px; background: linear-gradient(90deg, #21373f, #1d2c43); display: flex; color: #fff; }
.mini-bar > span { width: 16.330px; display: grid; place-items: center; flex-shrink: 0; }
.mini-bar > .sys { width: 16px; }
.mini-bar .run { box-shadow: inset 0 -1px #76c9f5; }
.mini-bar .live { background: #4cae50; }
.mini-tray { margin-left: 92px; display: grid; grid-template-columns: 13.500px 16.500px 27.500px 10px 11px 9.500px 12px 15px 19.500px 14px; align-items: center; }

.status { height: 22px; border-top: 1px solid #c8c6c4; background: #f3f3f3; display: grid; grid-template-columns: 82px 72px 31px 117px 19px 750px 27px 53px 33px 139px 30px; padding-left: 8px; align-items: center; flex-shrink: 0; color: #444; }
.selected { width: 40px; height: 21px; background: #c6c6c6; display: grid; place-items: center; }
.taskbar { height: 30px; display: flex; background: linear-gradient(90deg, #22363f, #20343f 45%, #1c2b44); color: #fff; flex-shrink: 0; }
.taskbar .sys { width: 36px; display: grid; place-items: center; }
.apps { display: flex; margin-left: 2.500px; width: 866.500px; }
.apps span { width: 28px; margin: 0 4.500px; display: grid; place-items: center; }
.apps .run { border-bottom: 2px solid #76c9f5; padding-top: 2px; }
.apps .active { width: 36px; margin: 0 .5px; background: #4c5e69; border-bottom: 2px solid #76c9f5; padding-top: 2px; }
.tray { display: grid; grid-template-columns: 30px 38px 46px 23px 24px 27px 21px 24px 35px 44px 36px 5px; align-items: center; font-size: 14px; }
.clock { font-size: 12px; }
.peek { height: 30px; border-left: 1px solid #6d7885; }
</style>
